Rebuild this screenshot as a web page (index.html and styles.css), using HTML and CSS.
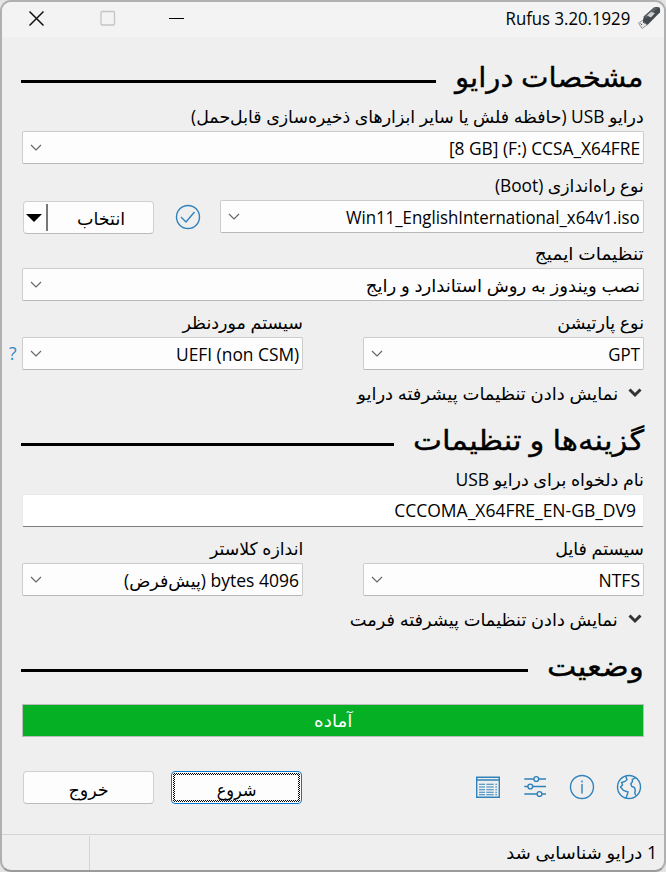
FILE: index.html
```html
<!DOCTYPE html>
<html lang="fa" dir="rtl">
<head>
<meta charset="utf-8">
<title>Rufus 3.20.1929</title>
<link rel="stylesheet" href="styles.css">
</head>
<body>
<main class="window">
  <header class="titlebar">
    <svg class="usb" width="24" height="24" viewBox="0 0 24 24"><path d="M.5 17L4.500 14.500l4.500 4.500-5 3.500z" fill="#e6e6e6" stroke="#888" stroke-width=".8"/><path d="M6 10.300L16 1.500q1-.7 5-.2 1.500.4 1 5L9.500 19 4.700 15z" fill="#43484c"/><path d="M6 10.300L16 1.500l4 .5L8 12.500z" fill="#5d6266"/><path d="M9 9.500l4-3.500 4 1-4 4.500z" fill="#cfcfcf"/><path d="M2.500 17.500l1.500 1.500M5 16l1.500 1.500" stroke="#555"/></svg>
    <span class="t title" dir="ltr">Rufus 3.20.1929</span>
    <svg class="controls" width="160" height="20" viewBox="0 0 160 20"><path d="M1.500 3.500l14 14m0-14l-14 14" stroke="#111" stroke-width="1.500"/><rect x="73" y="3.500" width="13.500" height="13.500" rx="1" fill="none" stroke="#c4c4c4" stroke-width="1.300"/><path d="M141 10.500h15" stroke="#000"/></svg>
  </header>
  <div class="form">
    <h2 class="section s1"><span class="t">مشخصات درایو</span><i class="rule"></i></h2>
    <div class="label"><span class="t l1">درایو USB (حافظه فلش یا سایر ابزارهای ذخیره‌سازی قابل‌حمل)</span></div>
    <div class="select"><span class="t c1" dir="ltr">[8 GB] (F:) CCSA_X64FRE</span><svg class="chev" viewBox="0 0 12 8"><path d="M1 1l5 5 5-5"/></svg></div>
    <div class="label"><span class="t l2">نوع راه‌اندازی (Boot)</span></div>
    <div class="row boot">
      <div class="select"><span class="t c2" dir="ltr">Win11_EnglishInternational_x64v1.iso</span><svg class="chev" viewBox="0 0 12 8"><path d="M1 1l5 5 5-5"/></svg></div>
      <svg class="check" width="26" height="26" viewBox="0 0 26 26"><circle cx="13" cy="13" r="11.500"/><path d="M6 13l5 5 8.500-10"/></svg>
      <div class="button split"><span class="t b1">انتخاب</span><i class="bar"></i><i class="arrow"></i></div>
    </div>
    <div class="label image"><span class="t l3">تنظیمات ایمیج</span></div>
    <div class="select"><span class="t c3">نصب ویندوز به روش استاندارد و رایج</span><svg class="chev" viewBox="0 0 12 8"><path d="M1 1l5 5 5-5"/></svg></div>
    <div class="row pair">
      <div><div class="label"><span class="t l4">نوع پارتیشن</span></div><div class="select"><span class="t c4">GPT</span><svg class="chev" viewBox="0 0 12 8"><path d="M1 1l5 5 5-5"/></svg></div></div>
      <div><div class="label"><span class="t l5">سیستم موردنظر</span></div><div class="select"><span class="t c5" dir="ltr">UEFI (non CSM)</span><svg class="chev" viewBox="0 0 12 8"><path d="M1 1l5 5 5-5"/></svg></div><span class="help">?</span></div>
    </div>
    <div class="more"><svg width="14" height="10" viewBox="0 0 14 10"><path d="M1.500 1.500L7 7l5.500-5.500"/></svg><span class="t m1">نمایش دادن تنظیمات پیشرفته درایو</span></div>
    <h2 class="section s2"><span class="t">گزینه‌ها و تنظیمات</span><i class="rule"></i></h2>
    <div class="label"><span class="t l6">نام دلخواه برای درایو USB</span></div>
    <div class="edit"><span class="t c6" dir="ltr">CCCOMA_X64FRE_EN-GB_DV9</span></div>
    <div class="row pair">
      <div><div class="label"><span class="t l7">سیستم فایل</span></div><div class="select"><span class="t c7">NTFS</span><svg class="chev" viewBox="0 0 12 8"><path d="M1 1l5 5 5-5"/></svg></div></div>
      <div><div class="label"><span class="t l8">اندازه کلاستر</span></div><div class="select"><span class="t c8">4096 bytes (پیش‌فرض)</span><svg class="chev" viewBox="0 0 12 8"><path d="M1 1l5 5 5-5"/></svg></div></div>
    </div>
    <div class="more"><svg width="14" height="10" viewBox="0 0 14 10"><path d="M1.500 1.500L7 7l5.500-5.500"/></svg><span class="t m2">نمایش دادن تنظیمات پیشرفته فرمت</span></div>
    <h2 class="section s3"><span class="t">وضعیت</span><i class="rule"></i></h2>
    <div class="progress"><span class="t p1">آماده</span></div>
    <div class="row actions">
      <div class="icons">
        <svg width="26" height="26" viewBox="0 0 26 26"><circle cx="13" cy="13" r="11.500"/><path d="M9.700 2.200l1.300 3.300-2 2-3.300 1 .8 2.500-2 2 3 3.500 4.500 1.500-.5 2-1.500 4M19.700 3.700L16.300 5.500l.2 2-1.700 2.300 1 2.700 2.700 1 .8 3-.5 2 .8 3"/></svg>
        <svg width="26" height="26" viewBox="0 0 26 26"><circle cx="13" cy="13" r="11.500"/><path d="M13 10v9.500M13 6.500v2"/></svg>
        <svg width="26" height="26" viewBox="0 0 26 26"><path d="M2.300 5h9.500m5 0H24M2.300 12.500h3.500m5 0H24M2.300 20H15m5 0h4"/><circle cx="14.300" cy="5" r="2.400"/><circle cx="8.300" cy="12.500" r="2.400"/><circle cx="17.500" cy="20" r="2.400"/></svg>
        <svg width="26" height="26" viewBox="0 0 26 26"><path d="M1.700 3.200h22.600v20H1.700zM1.700 6h22.600"/><path stroke-width="1.100" d="M4 10.300h6m1.300 0h7.400m1.600 0H22M4 13h6m1.300 0h7.400m1.600 0H22M4 15.700h6m1.300 0h7.400m1.600 0H22M4 18.300h6m1.300 0h7.400m1.600 0H22M4 20.700h6m1.300 0h7.400m1.600 0H22"/></svg>
      </div>
      <div class="button start"><span class="t b2">شروع</span></div>
      <div class="button"><span class="t b3">خروج</span></div>
    </div>
  </div>
  <footer class="status"><span class="t f1">1 درایو شناسایی شد</span><i class="pane"></i></footer>
</main>
</body>
</html>
```
FILE: styles.css
```css
* { box-sizing: border-box; }
body { margin: 0; background: #e4e4e4; font: 17.5px/24px "Open Sans", "DejaVu Sans", sans-serif; color: #000; }
.window { width: 666px; height: 872px; border: 2px solid #b0b0b0; border-bottom-color: #9b9b9b; border-radius: 11px; background: #efefef; overflow: hidden; display: flex; flex-direction: column; }
.titlebar { height: 35px; background: #f3f3f3; display: flex; align-items: center; padding: 0 2px 4px 26px; flex: none; }
.title { margin-right: 8px; }
.controls { margin-right: auto; }

/* Horizontal fit of each caption */
.t { display: inline-block; white-space: nowrap; transform-origin: right center; }
.title { transform: scaleX(.957); }
.l1 { transform: scaleX(.991); }
.c1 { transform: scaleX(.99); }
.l2 { transform: scaleX(.987); }
.c2 { transform: scaleX(.961); }
.l3 { transform: scaleX(1.06); }
.c3 { transform: scaleX(1.035); }
.c4 { transform: scaleX(.96); }
.c5 { transform: scaleX(.992); }
.m1 { transform: scaleX(1.027); }
.m2 { transform: scaleX(1.016); }
.l8 { transform: scaleX(.99); }
.f1 { transform: scaleX(1.025); }
.p1 { transform: scaleX(1.05); transform-origin: center; }
.b2 { transform: scaleX(.92); transform-origin: center; }

.form { padding: 23px 20px 0; flex: 1; }
.section { margin: 3px 0 4px; height: 37px; display: flex; align-items: center; justify-content: space-between; font-size: 28px; font-weight: 400; line-height: 36px; -webkit-text-stroke: .35px #000; }
.section .t { margin-bottom: 5px; }
.rule { height: 3px; background: #000; margin: 6px 0 0 -1px; }
.s1 { margin-top: 0; }
.s1 .t { transform: scaleX(1.045); }
.s1 .rule { width: 415px; }
.s2 .t { transform: scaleX(1.1); }
.s2 .rule { width: 373px; }
.s3 { margin-bottom: 18px; }
.s3 .t { transform: scaleX(1.115); }
.s3 .rule { width: 507px; }
.label { height: 36px; padding-top: 9px; }
.image { height: 35px; padding-top: 8px; }
.section + .label { height: 30px; padding-top: 3px; }
.select, .edit { height: 33px; background: #fdfdfd; border: 1px solid #ccc; border-bottom-color: #b8b8b8; border-radius: 2px; display: flex; align-items: center; justify-content: space-between; padding: 0 3px 0 7px; }
.edit { border-color: #eaeaea; border-bottom-color: #7c7c7c; background: #fff; padding: 0 7px 2px; }
.chev { width: 12px; height: 8px; margin-top: 1px; fill: none; stroke: #666; stroke-width: 1.2; }
.row { display: flex; }
.pair { justify-content: space-between; }
.pair > div { width: 281px; position: relative; }
.boot { height: 33px; }
.boot .select { width: 424px; }
.check { margin: 4px 19px 0 21px; }
.check, .icons svg { fill: none; stroke: #2f82ba; stroke-width: 1.4; }
.help { position: absolute; left: -13px; bottom: 5px; color: #3b88c3; }
.button { width: 131px; height: 33px; background: #fdfdfd; border: 1px solid #d0d0d0; border-bottom-color: #bbb; border-radius: 4px; display: flex; align-items: center; justify-content: center; padding-top: 2px; }
.split { margin-top: 1px; justify-content: flex-end; padding: 0 0 0 2px; }
.split .t { margin: 1px 0 0 29px; }
.bar { width: 2px; height: 27px; background: #777; margin-left: 4px; }
.arrow { border: 8px solid transparent; border-top-color: #000; border-bottom-width: 0; }
.start { position: relative; border-color: #0078d4; }
.start::before { content: ""; position: absolute; inset: 1px; padding: 2px; background: linear-gradient(#fdfdfd, #fdfdfd) content-box, repeating-conic-gradient(#000 0 25%, #fff 0 50%) 0 0 / 2px 2px padding-box; }
.start .t { position: relative; }
.more { height: 50px; padding: 0 2px 4px 0; display: flex; align-items: center; gap: 10px; }
.more svg { fill: none; stroke: #333; stroke-width: 3; }
.progress { height: 33px; background: #06b025; border: 1px solid #bcbcbc; color: #fff; display: flex; align-items: center; justify-content: center; padding-bottom: 1px; }
.actions { margin-top: 34px; gap: 17px; padding-left: 1px; }
.icons { display: flex; gap: 21px; align-items: center; margin: 0 2px 0 auto; padding-bottom: 1px; }
.status { height: 36px; border-top: 1px solid #d4d4d4; padding: 0 7px 0 87px; display: flex; align-items: center; justify-content: space-between; }
.status .t { margin-bottom: 2px; }
.pane { width: 1px; height: 34px; background: #d4d4d4; }
```
